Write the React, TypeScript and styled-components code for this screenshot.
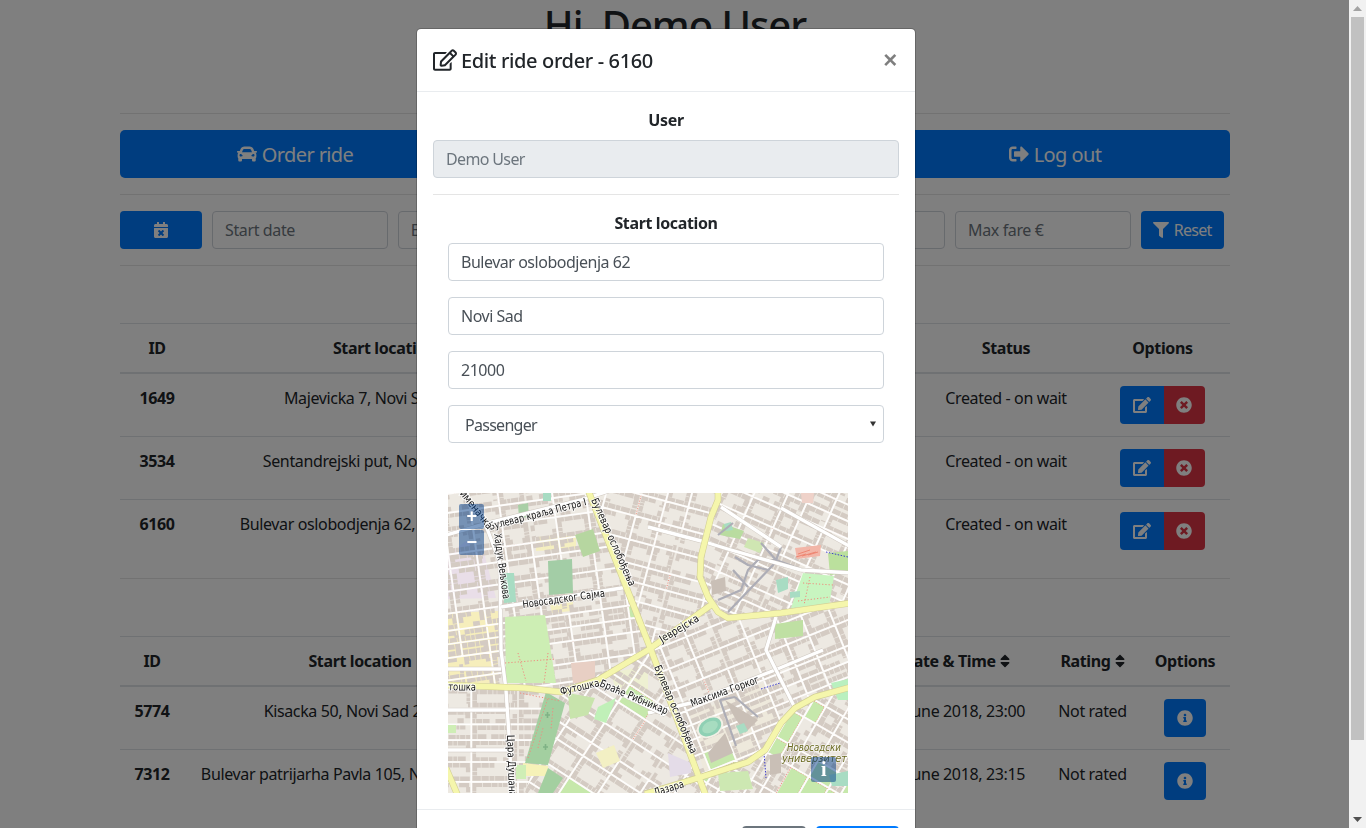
import React from "react";
import styled, { createGlobalStyle } from "styled-components";
import {
  FaCar,
  FaSignOutAlt,
  FaRegEdit,
  FaEdit,
  FaTimesCircle,
  FaInfoCircle,
  FaFilter,
  FaCalendarTimes,
  FaSort,
} from "react-icons/fa";

const FONT = `"Noto Sans", "Segoe UI", Arial, sans-serif`;

const Global = createGlobalStyle`
  html, body { margin: 0; padding: 0; height: 100%; overflow: hidden; background: #fff; }
  * { box-sizing: border-box; }
  body { font-family: ${FONT}; font-size: 16px; line-height: 24px; color: #212529; letter-spacing: -0.023em; }
  input, select, button { font-family: inherit; letter-spacing: inherit; }
`;

/* ---------- page frame ---------- */
const Shell = styled.div`
  display: flex;
  width: 1366px;
  height: 828px;
  overflow: hidden;
`;
const Page = styled.main`
  width: 1349px;
  height: 828px;
  overflow: hidden;
  flex: none;
`;
const Container = styled.div`
  width: 1110px;
  margin-left: 120px;
`;
const Title = styled.h1`
  margin: 1px 0 64px;
  height: 48px;
  font-size: 40px;
  line-height: 48px;
  font-weight: 500;
  text-align: center;
  letter-spacing: -0.026em;
`;
const Rule = styled.hr<{ $after?: number }>`
  border: 0;
  border-top: 1px solid rgba(0, 0, 0, 0.1);
  margin: 0 0 ${(p) => p.$after ?? 16}px;
`;
const BigRow = styled.div`
  display: grid;
  grid-template-columns: repeat(3, 350px);
  gap: 30px;
  margin-bottom: 16px;
`;
const BigButton = styled.button`
  height: 48px;
  border: 0;
  border-radius: 5px;
  background: #007bff;
  color: #fff;
  font-size: 20px;
  letter-spacing: -0.03em;
  display: flex;
  align-items: center;
  justify-content: center;
  gap: 5px;
`;
const FilterRow = styled.div`
  display: flex;
  gap: 10px;
  margin-bottom: 16px;
`;
const PrimaryButton = styled.button<{ $w: number }>`
  width: ${(p) => p.$w}px;
  height: 38px;
  border: 0;
  border-radius: 4px;
  background: #007bff;
  color: #fff;
  font-size: 16px;
  letter-spacing: -0.045em;
  display: flex;
  align-items: center;
  justify-content: center;
  gap: 5px;
  flex: none;
`;
const FilterInput = styled.input`
  width: 175.75px;
  height: 38px;
  flex: none;
  border: 1px solid #ced4da;
  border-radius: 4px;
  padding: 6px 12px;
  font-size: 16px;
  color: #495057;
  background: #fff;
  &::placeholder { color: #6c757d; opacity: 1; }
`;
const Table = styled.table`
  width: 1110px;
  table-layout: fixed;
  border-collapse: collapse;
  margin-bottom: 15px;
`;
const Col = styled.col<{ $w: number }>`
  width: ${(p) => p.$w}px;
`;
const Th = styled.th`
  padding: 12px;
  height: 49px;
  text-align: center;
  font-weight: 700;
  white-space: nowrap;
  border-top: 1px solid #dee2e6;
  border-bottom: 2px solid #dee2e6;
  vertical-align: middle;
`;
const RatingTh = styled(Th)`
  padding-left: 17px;
`;
const SortIcon = styled(FaSort)`
  width: 10px;
  height: 16px;
  margin-left: 4px;
  vertical-align: -2px;
`;
const Td = styled.td`
  padding: 12px;
  height: 63px;
  text-align: center;
  vertical-align: top;
  white-space: nowrap;
  border-top: 1px solid #dee2e6;
`;
const DateTd = styled(Td)`
  padding-left: 20px;
`;
const RatingTd = styled(Td)`
  padding-left: 17px;
`;
const IdCell = styled(Td)`
  font-weight: 700;
`;
const ButtonGroup = styled.div`
  display: inline-flex;
  vertical-align: top;
`;
const ActionEdit = styled.button`
  width: 44px;
  height: 38px;
  border: 0;
  border-radius: 4px 0 0 4px;
  background: #007bff;
  color: #fff;
  display: flex;
  align-items: center;
  justify-content: center;
  padding: 0;
  font-size: 16px;
`;
const ActionDelete = styled(ActionEdit)`
  width: 41px;
  padding-right: 1px;
  border-radius: 0 4px 4px 0;
  background: #dc3545;
`;
const ActionInfo = styled(ActionEdit)`
  width: 42px;
  border-radius: 4px;
  display: inline-flex;
  vertical-align: top;
`;

/* ---------- scrollbar ---------- */
const ScrollTrack = styled.aside`
  width: 17px;
  height: 828px;
  flex: none;
  background: #f1f1f1;
  display: flex;
  flex-direction: column;
  align-items: center;
  justify-content: space-between;
`;
const ScrollArrow = styled.div`
  width: 17px;
  height: 17px;
  flex: none;
  display: flex;
  align-items: center;
  justify-content: center;
`;
const ScrollThumb = styled.div`
  width: 13px;
  height: 723px;
  flex: none;
  background: #c1c1c1;
`;
const ScrollColumn = styled.div`
  display: flex;
  flex-direction: column;
  align-items: center;
`;

/* ---------- modal ---------- */
const Backdrop = styled.div`
  position: fixed;
  left: 0;
  top: 0;
  width: 1349px;
  height: 828px;
  background: rgba(0, 0, 0, 0.5);
`;
const ModalLayer = styled.div`
  position: fixed;
  left: 0;
  top: 0;
  width: 1332px;
  height: 828px;
  overflow: hidden;
`;
const Dialog = styled.section`
  width: 500px;
  margin: 28px auto 0;
  background: #fff;
  background-clip: padding-box;
  border: 1px solid rgba(0, 0, 0, 0.2);
  border-radius: 5px;
`;
const ModalHeader = styled.header`
  height: 63px;
  padding: 16px;
  display: flex;
  align-items: center;
  justify-content: space-between;
  border-bottom: 1px solid #e9ecef;
`;
const ModalTitle = styled.h5`
  margin: 2px 0 0;
  font-size: 20px;
  line-height: 30px;
  font-weight: 500;
  display: flex;
  align-items: center;
  gap: 4px;
`;
const TitleIcon = styled(FaRegEdit)`
  margin-top: -2px;
`;
const CloseX = styled.button`
  border: 0;
  background: none;
  padding: 0;
  margin: 0 2px 0 0;
  font-family: "Liberation Sans", Arial, sans-serif;
  font-size: 24px;
  line-height: 24px;
  font-weight: 700;
  color: #000;
  opacity: 0.5;
`;
const ModalBody = styled.div`
  padding: 16px;
`;
const Label = styled.div`
  font-weight: 700;
  text-align: center;
  margin-bottom: 8px;
`;
const Inset = styled.div`
  padding: 0 15px;
`;
const Field = styled.input`
  display: block;
  width: 100%;
  height: 38px;
  padding: 6px 12px;
  font-size: 16px;
  letter-spacing: -0.03em;
  color: #495057;
  background: #fff;
  border: 1px solid #ced4da;
  border-radius: 4px;
  margin-bottom: 16px;
  &:disabled {
    background: #e9ecef;
    color: #6c757d;
    -webkit-text-fill-color: #6c757d;
    opacity: 1;
    letter-spacing: -0.04em;
  }
`;
const SelectWrap = styled.div`
  position: relative;
  height: 38px;
  margin-bottom: 50px;
`;
const Select = styled.select`
  width: 100%;
  height: 38px;
  appearance: none;
  padding: 1px 12px 0 16px;
  font-size: 16px;
  letter-spacing: -0.045em;
  color: #495057;
  background: #fff;
  border: 1px solid #ced4da;
  border-radius: 4px;
`;
const SelectCaret = styled.svg`
  position: absolute;
  right: 8px;
  top: 16px;
  width: 6px;
  height: 6px;
  pointer-events: none;
`;
const MapBox = styled.div`
  position: relative;
  width: 400px;
  height: 300px;
  overflow: hidden;
`;
const MapSvg = styled.svg`
  display: block;
  width: 400px;
  height: 300px;
  filter: blur(0.4px);
`;
const MapControl = styled.button<{ $x: number; $y: number }>`
  position: absolute;
  left: ${(p) => p.$x}px;
  top: ${(p) => p.$y}px;
  width: 25px;
  height: 25px;
  border: 0;
  padding: 0;
  border-radius: 2px;
  background: rgba(0, 60, 136, 0.5);
  color: #fff;
  font-family: "Liberation Sans", Arial, sans-serif;
  font-size: 18px;
  line-height: 25px;
  font-weight: 700;
  text-align: center;
`;
const MapInfo = styled(MapControl)`
  font-family: "Liberation Serif", serif;
  font-size: 20px;
`;
const ModalFooter = styled.footer`
  height: 60px;
  padding: 16px;
  display: flex;
  justify-content: flex-end;
  gap: 10px;
  border-top: 1px solid #e9ecef;
`;
const FooterButton = styled.button<{ $w: number; $bg: string }>`
  width: ${(p) => p.$w}px;
  height: 38px;
  border: 0;
  border-radius: 4px;
  background: ${(p) => p.$bg};
  color: #fff;
  font-size: 16px;
`;

/* ---------- map drawing ---------- */
const RoadLabel = styled.text`
  font-family: "DejaVu Sans", sans-serif;
  font-size: 10.5px;
  letter-spacing: 0;
  fill: #111;
  stroke: #fff;
  stroke-width: 2px;
  stroke-opacity: 0.85;
  paint-order: stroke;
`;
const PlaceLabel = styled(RoadLabel)`
  font-style: italic;
  fill: #6a6a20;
  stroke-width: 1.5px;
  stroke-opacity: 0.6;
`;

type Pt = [number, number];
type Region = { id: string; poly: Pt[]; angle: number; bw: number; bh: number; seed: number; green: number; path: number };

const rng = (s: number) => () => {
  s |= 0;
  s = (s + 0x6d2b79f5) | 0;
  let t = Math.imul(s ^ (s >>> 15), 1 | s);
  t = (t + Math.imul(t ^ (t >>> 7), 61 | t)) ^ t;
  return ((t ^ (t >>> 14)) >>> 0) / 4294967296;
};

const REGIONS: Region[] = [
  { id: "ra", poly: [[-5, -5], [141, -5], [203, 157], [150, 187], [113, 199], [77, 195], [-5, 192]], angle: -8, bw: 27, bh: 18, seed: 11, green: 0.05, path: 0.12 },
  { id: "rb", poly: [[141, -5], [272, -5], [252, 84], [262, 112], [203, 157]], angle: 15, bw: 30, bh: 20, seed: 23, green: 0.04, path: 0.08 },
  { id: "rc", poly: [[272, -5], [405, -5], [405, 110], [280, 125], [260, 100], [252, 84]], angle: 24, bw: 24, bh: 19, seed: 37, green: 0.05, path: 0.18 },
  { id: "rd", poly: [[-5, 192], [77, 195], [113, 199], [75, 305], [-5, 305]], angle: 0, bw: 46, bh: 19, seed: 41, green: 0.03, path: 0.04 },
  { id: "re", poly: [[113, 199], [203, 157], [258, 305], [75, 305]], angle: 33, bw: 27, bh: 20, seed: 53, green: 0.07, path: 0.2 },
  { id: "rf", poly: [[203, 157], [263, 112], [280, 125], [333, 120], [405, 110], [405, 194], [367, 204], [347, 215], [333, 230], [317, 257], [300, 269], [250, 285]], angle: -22, bw: 31, bh: 19, seed: 67, green: 0.04, path: 0.12 },
  { id: "rg", poly: [[250, 285], [300, 269], [317, 257], [333, 230], [347, 215], [367, 204], [405, 194], [405, 305], [255, 305]], angle: 30, bw: 18, bh: 25, seed: 79, green: 0.26, path: 0.6 },
];

const r1 = (n: number) => Math.round(n * 10) / 10;

function steps(rand: () => number, size: number) {
  const out: number[] = [];
  let p = -340 - rand() * size;
  while (p < 340) {
    out.push(p);
    p += size * (0.72 + rand() * 0.6);
  }
  return out;
}

function buildRegion(reg: Region) {
  const rand = rng(reg.seed);
  let buildings = "";
  let streets = "";
  let dots = "";
  let greens = "";
  const rect = (x: number, y: number, w: number, h: number) =>
    `M${r1(x)} ${r1(y)}h${r1(w)}v${r1(h)}h${r1(-w)}z`;
  const us = steps(rand, reg.bw);
  const vs = steps(rand, reg.bh);
  for (let i = 0; i < us.length - 1; i++) {
    for (let j = 0; j < vs.length - 1; j++) {
      const g = 1;
      const x0 = us[i] + g, y0 = vs[j] + g, x1 = us[i + 1] - g, y1 = vs[j + 1] - g;
      const bh = y1 - y0;
      if (rand() < reg.green) {
        greens += rect(x0, y0, x1 - x0, y1 - y0);
        if (rand() > 0.4) dots += `M${r1(x0)} ${r1(y0)}H${r1(x1)}V${r1(y1)}`;
        continue;
      }
      const d = Math.min(bh / 2 - 0.8, 3.6 + rand() * 1.6);
      for (let x = x0; x < x1 - 1; ) {
        const w = 3 + rand() * 7;
        if (rand() > 0.1) buildings += rect(x, y0, Math.min(w, x1 - x), d);
        if (rand() > 0.1) buildings += rect(x, y1 - d, Math.min(w, x1 - x), d);
        x += w + 0.7;
      }
      for (let y = y0 + d; y < y1 - d; ) {
        const w = 2 + rand() * 4;
        if (rand() > 0.25) buildings += rect(x0, y, d, Math.min(w, y1 - d - y));
        if (rand() > 0.25) buildings += rect(x1 - d, y, d, Math.min(w, y1 - d - y));
        y += w + 0.7;
      }
      if (rand() < reg.path) dots += `M${r1(x0)} ${r1(y1 + g)}H${r1(x1)}`;
      if (rand() < reg.path * 0.7) dots += `M${r1(x1 + g)} ${r1(y0)}V${r1(y1)}`;
    }
  }
  us.forEach((u) => {
    let j = 0;
    while (j < vs.length - 1) {
      const n = 2 + Math.floor(rand() * 5);
      const end = Math.min(j + n, vs.length - 1);
      if (rand() > 0.15) streets += `M${r1(u)} ${r1(vs[j])}V${r1(vs[end])}`;
      j = end;
    }
  });
  vs.forEach((v) => {
    streets += `M-340 ${r1(v)}H340`;
  });
  return { ...reg, buildings, streets, dots, greens };
}
const BUILT = REGIONS.map(buildRegion);

/* land use drawn below the buildings */
const LANDUSE: { c: string; p: string }[] = [
  { c: "#e9dee8", p: "0,62 18,48 36,60 48,105 0,106" },
  { c: "#f6eebc", p: "0,120 50,118 50,190 0,190" },
  { c: "#f5efc0", p: "88,44 128,42 128,56 88,58" },
  { c: "#f5efc0", p: "100,104 126,100 124,118 104,120" },
  { c: "#eee9dc", p: "242,222 315,190 332,225 300,262 256,280" },
  { c: "#eef0d2", p: "163,180 200,172 200,207 172,213" },
];
/* parks, pitches and big buildings drawn above them */
const AREAS: { c: string; p: string }[] = [
  { c: "#a3cda6", p: "100,68 124,66 125,100 101,102" },
  { c: "#a8dcc3", p: "55,80 66,80 68,109 56,110" },
  { c: "#a9cfa6", p: "70,12 80,10 81,24 71,25" },
  { c: "#a8dcc3", p: "95,0 103,0 103,8 95,8" },
  { c: "#cdeeb4", p: "57,124 97,122 108,190 58,190" },
  { c: "#b6d6a0", p: "127,42 145,36 152,58 135,64" },
  { c: "#efd2c9", p: "353,0 366,0 365,10 354,10" },
  { c: "#f2b6a8", p: "347,55 373,52 372,63 349,66" },
  { c: "#bbe09d", p: "380,60 400,58 400,80 382,82" },
  { c: "#c8f5c0", p: "355,80 386,83 381,113 343,115" },
  { c: "#a8dcc3", p: "328,87 340,84 340,96 330,100" },
  { c: "#a8dcc3", p: "342,99 352,98 352,104 342,105" },
  { c: "#bfe0a3", p: "327,131 355,127 355,143 327,146" },
  { c: "#b9dca0", p: "275,31 296,38 292,46 272,42" },
  { c: "#a8dcc3", p: "276,31 283,29 285,37 278,38" },
  { c: "#c9bfb6", p: "263,88 277,84 278,98 264,102" },
  { c: "#cfe6b2", p: "300,45 316,50 312,60 296,54" },
  { c: "#e8cfc4", p: "123,170 147,168 147,190 125,190" },
  { c: "#a3cfa0", p: "98,199 117,210 100,272 77,270" },
  { c: "#f6f2b8", p: "75,270 100,273 100,283 75,283" },
  { c: "#a3cfa0", p: "100,275 115,285 105,300 90,300" },
  { c: "#c8e4ac", p: "120,200 147,205 140,222 122,226" },
  { c: "#c0f0b8", p: "150,214 168,205 158,230 146,226" },
  { c: "#c9bfb6", p: "277,207 310,227 297,240 287,225" },
  { c: "#c9bfb6", p: "260,260 277,240 285,260 263,270" },
  { c: "#c9bfb6", p: "322,262 333,260 333,280 322,282" },
  { c: "#a8dcc3", p: "288,233 296,230 300,238 292,241" },
  { c: "#e4dce8", p: "220,260 243,270 243,280 222,284" },
  { c: "#b9f0bf", p: "383,190 400,186 400,207 390,207" },
  { c: "#a8dcc3", p: "381,282 400,278 400,293 384,293" },
  { c: "#cde8b2", p: "270,280 300,278 305,296 272,298" },
  { c: "#f3f0c4", p: "148,260 166,252 172,268 155,275" },
  { c: "#cfeeb6", p: "0,232 8,232 8,240 0,240" },
  { c: "#cfeeb6", p: "68,272 78,272 78,286 68,286" },
];

const WHITE_MAJOR = [
  "M-2,42 L40,30 L133,7 L170,-5",
  "M37,30 L52,70 L53,157 L58,197 L62,257 L63,303",
  "M53,114 L180,94",
  "M200,220 L243,210 L327,177 L375,157",
  "M328,124 L318,157 L347,215",
  "M150,190 L217,222",
  "M200,34 L257,49 L283,57 L353,77 L403,80",
  "M273,14 L333,54",
  "M333,15 L403,54",
  "M0,257 L60,257",
  "M0,217 L58,217",
  "M0,176 L53,176",
];
const GREY_PATHS = [
  "M280,119 L327,70 L333,54",
  "M287,64 L300,72 L320,77",
  "M313,50 L328,67 L355,77",
  "M270,107 L293,97 L300,77 L310,67 L328,67",
  "M285,77 L300,94",
  "M272,207 L288,253",
  "M287,204 L310,224",
  "M272,207 L287,204",
  "M285,30 L270,42",
];
const YELLOW = [
  "M140,-3 L203,157 L258,303",
  "M270,-3 L270,7 L263,24 L253,64 L252,84 L260,104 L270,119 L280,125 L333,120 L403,110",
  "M263,112 L200,157 L150,187 L113,199 L77,195 L-2,192",
  "M403,194 L367,204 L347,215 L333,230 L317,257 L300,269 L250,285 L197,301",
  "M-2,275 L10,303",
];
const LABELS: { x: number; y: number; a: number; t: string; w: number }[] = [
  { x: 42, y: 37, a: -14.5, t: "Булевар краља Петра I", w: 100 },
  { x: 143, y: 7, a: 66, t: "Булевар ослобођења", w: 95 },
  { x: 46, y: 41, a: 82, t: "Хајдук Вељкова", w: 66 },
  { x: 75, y: 115, a: -8, t: "Новосадског Сајма", w: 83 },
  { x: 8, y: -4, a: 52, t: "Гименачка", w: 52 },
  { x: 214, y: 150, a: -31, t: "Јеврејска", w: 44 },
  { x: -12, y: 197, a: 1, t: "Футошка", w: 40 },
  { x: 113, y: 202, a: -13, t: "Футошка", w: 40 },
  { x: 151, y: 193, a: 23, t: "Браће Рибникар", w: 73 },
  { x: 59, y: 242, a: 88, t: "Цара Душана", w: 62 },
  { x: 206, y: 174, a: 67, t: "Булевар ослобођења", w: 95 },
  { x: 244, y: 214, a: -20, t: "Максима Горког", w: 72 },
  { x: 207, y: 303, a: -17, t: "Лазара", w: 31 },
];

function CityMap() {
  return (
    <MapSvg viewBox="0 0 400 300" aria-hidden="true">
      <defs>
        {BUILT.map((r) => (
          <clipPath key={r.id} id={r.id}>
            <polygon points={r.poly.map((p) => p.join(",")).join(" ")} />
          </clipPath>
        ))}
      </defs>
      <rect width="400" height="300" fill="#ede9e2" />
      {LANDUSE.map((a, i) => (
        <polygon key={i} points={a.p} fill={a.c} />
      ))}
      {BUILT.map((r) => (
        <g key={r.id} clipPath={`url(#${r.id})`}>
          <g transform={`translate(200 150) rotate(${r.angle})`}>
            <path d={r.greens} fill="#c6e8ab" />
            <path d={r.buildings} fill="#d4cbc3" />
            <path d={r.dots} fill="none" stroke="#f08b7e" strokeWidth="0.9" strokeDasharray="1 1.6" />
            <path d={r.streets} fill="none" stroke="#fefdfc" strokeWidth="1.7" />
          </g>
        </g>
      ))}
      {AREAS.map((a, i) => (
        <polygon key={i} points={a.p} fill={a.c} />
      ))}
      <ellipse cx="262" cy="234" rx="14" ry="10" transform="rotate(-30 262 234)" fill="#f2f0e6" />
      <ellipse cx="262" cy="234" rx="12" ry="8.4" transform="rotate(-30 262 234)" fill="#8fd0b4" />
      <ellipse cx="262" cy="234" rx="8.5" ry="5.4" transform="rotate(-30 262 234)" fill="#a7dcc0" />
      <path d="M105,215 l-2,22 M90,255 l5,-20 M80,265 l20,-60 M72,200 l40,8 M57,170 l50,-4 M70,160 l8,28 M100,160 l-4,30 M355,90 l30,2 M350,108 l32,-4 M362,84 l-6,28" fill="none" stroke="#f08b7e" strokeWidth="1" strokeDasharray="1.2 2" />
      <path d="M97,222 h5 m-2.5,-3 v6 M95,254 h5 m-2.5,-3 v6" stroke="#7fb285" strokeWidth="1.6" fill="none" />
      <path d="M348,64 l10,-3 M350,61 l12,-4 M354,63 l14,-4 M360,62 l10,-3" stroke="#ee8672" strokeWidth="1" fill="none" />
      <path d="M378,59 L400,64 M313,196 L332,190 M316,260 L318,285" fill="none" stroke="#3a3ad0" strokeWidth="1" strokeDasharray="1.5 1.5" />
      {GREY_PATHS.map((d) => (
        <path key={d} d={d} fill="none" stroke="#adadb6" strokeWidth="2.2" strokeLinejoin="round" />
      ))}
      {WHITE_MAJOR.map((d) => (
        <g key={d}>
          <path d={d} fill="none" stroke="#cfc8c0" strokeWidth="4.4" strokeLinejoin="round" />
          <path d={d} fill="none" stroke="#ffffff" strokeWidth="3.4" strokeLinejoin="round" />
        </g>
      ))}
      {YELLOW.map((d) => (
        <path key={d} d={d} fill="none" stroke="#d2cf94" strokeWidth="6.6" strokeLinejoin="round" />
      ))}
      {YELLOW.map((d) => (
        <path key={d + "f"} d={d} fill="none" stroke="#f5f6ac" strokeWidth="5.4" strokeLinejoin="round" />
      ))}
      {LABELS.map((l) => (
        <RoadLabel
          key={l.t + l.x}
          transform={`translate(${l.x} ${l.y}) rotate(${l.a})`}
          textLength={l.w}
          lengthAdjust="spacingAndGlyphs"
        >
          {l.t}
        </RoadLabel>
      ))}
      <PlaceLabel x="339" y="258" textLength="54" lengthAdjust="spacingAndGlyphs">Новосадски</PlaceLabel>
      <PlaceLabel x="334" y="269" textLength="65" lengthAdjust="spacingAndGlyphs">универзитет</PlaceLabel>
    </MapSvg>
  );
}

/* ---------- data ---------- */
const ACTIVE = [
  { id: "1649", start: "Majevicka 7, Novi Sad 21000" },
  { id: "3534", start: "Sentandrejski put, Novi Sad 21000" },
  { id: "6160", start: "Bulevar oslobodjenja 62, Novi Sad 21000" },
];
const PAST = [
  { id: "5774", start: "Kisacka 50, Novi Sad 21000", date: "8 June 2018, 23:00" },
  { id: "7312", start: "Bulevar patrijarha Pavla 105, Novi Sad 21000", date: "8 June 2018, 23:15" },
];

export default function App() {
  return (
    <Shell>
      <Global />
      <Page>
        <Container>
          <Title>Hi, Demo User</Title>
          <Rule />
          <BigRow>
            <BigButton><FaCar size={20} /> Order ride</BigButton>
            <BigButton />
            <BigButton><FaSignOutAlt size={20} /> Log out</BigButton>
          </BigRow>
          <Rule />
          <FilterRow>
            <PrimaryButton $w={82}><FaCalendarTimes size={16} /></PrimaryButton>
            <FilterInput placeholder="Start date" readOnly />
            <FilterInput placeholder="End date" readOnly />
            <FilterInput readOnly />
            <FilterInput readOnly />
            <FilterInput placeholder="Max fare €" readOnly />
            <PrimaryButton $w={83}><FaFilter size={16} /> Reset</PrimaryButton>
          </FilterRow>
          <Rule $after={57} />
          <Table>
            <colgroup>
              <Col $w={74} /><Col $w={381} /><Col $w={342} /><Col $w={178} /><Col $w={135} />
            </colgroup>
            <thead>
              <tr><Th>ID</Th><Th>Start location</Th><Th /><Th>Status</Th><Th>Options</Th></tr>
            </thead>
            <tbody>
              {ACTIVE.map((r) => (
                <tr key={r.id}>
                  <IdCell>{r.id}</IdCell>
                  <Td>{r.start}</Td>
                  <Td />
                  <Td>Created - on wait</Td>
                  <Td>
                    <ButtonGroup>
                      <ActionEdit><FaEdit size={18} /></ActionEdit>
                      <ActionDelete><FaTimesCircle size={16} /></ActionDelete>
                    </ButtonGroup>
                  </Td>
                </tr>
              ))}
            </tbody>
          </Table>
          <Rule $after={57} />
          <Table>
            <colgroup>
              <Col $w={64} /><Col $w={352} /><Col $w={336} /><Col $w={168} /><Col $w={100} /><Col $w={90} />
            </colgroup>
            <thead>
              <tr>
                <Th>ID</Th>
                <Th>Start location</Th>
                <Th />
                <Th>Date &amp; Time<SortIcon /></Th>
                <RatingTh>Rating<SortIcon /></RatingTh>
                <Th>Options</Th>
              </tr>
            </thead>
            <tbody>
              {PAST.map((r) => (
                <tr key={r.id}>
                  <IdCell>{r.id}</IdCell>
                  <Td>{r.start}</Td>
                  <Td />
                  <DateTd>{r.date}</DateTd>
                  <RatingTd>Not rated</RatingTd>
                  <Td><ActionInfo><FaInfoCircle size={16} /></ActionInfo></Td>
                </tr>
              ))}
            </tbody>
          </Table>
        </Container>
      </Page>
      <ScrollTrack>
        <ScrollColumn>
          <ScrollArrow>
            <svg width="9" height="5" viewBox="0 0 9 5"><path d="M4.5 0 L9 5 H0 Z" fill="#a3a3a3" /></svg>
          </ScrollArrow>
          <ScrollThumb />
        </ScrollColumn>
        <ScrollArrow>
          <svg width="9" height="5" viewBox="0 0 9 5"><path d="M0 0 H9 L4.5 5 Z" fill="#505050" /></svg>
        </ScrollArrow>
      </ScrollTrack>
      <Backdrop />
      <ModalLayer>
        <Dialog>
          <ModalHeader>
            <ModalTitle><TitleIcon size={24} /> Edit ride order - 6160</ModalTitle>
            <CloseX>×</CloseX>
          </ModalHeader>
          <ModalBody>
            <Label>User</Label>
            <Field value="Demo User" disabled />
            <Rule />
            <Label>Start location</Label>
            <Inset>
              <Field value="Bulevar oslobodjenja 62" readOnly />
              <Field value="Novi Sad" readOnly />
              <Field value="21000" readOnly />
              <SelectWrap>
                <Select defaultValue="Passenger">
                  <option>Passenger</option>
                </Select>
                <SelectCaret viewBox="0 0 6 6"><path d="M0 0.5 H6 L3 5.5 Z" fill="#333" /></SelectCaret>
              </SelectWrap>
              <MapBox>
                <CityMap />
                <MapControl $x={11} $y={11}>+</MapControl>
                <MapControl $x={11} $y={37}>−</MapControl>
                <MapInfo $x={363} $y={264}>i</MapInfo>
              </MapBox>
            </Inset>
          </ModalBody>
          <ModalFooter>
            <FooterButton $w={64} $bg="#6c757d">Close</FooterButton>
            <FooterButton $w={83} $bg="#007bff">Save</FooterButton>
          </ModalFooter>
        </Dialog>
      </ModalLayer>
    </Shell>
  );
}
